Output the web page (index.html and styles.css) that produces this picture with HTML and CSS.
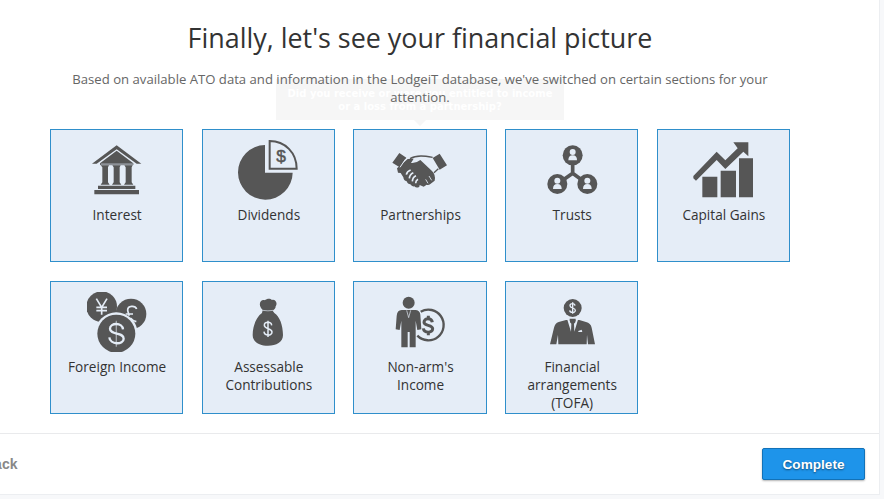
FILE: index.html
```html
<!DOCTYPE html>
<html lang="en">
<head>
<meta charset="utf-8">
<title>Financial picture</title>
<link rel="stylesheet" href="styles.css">
</head>
<body>
<main class="panel">
  <header class="intro">
    <h1 class="title">Finally, let's see your financial picture</h1>
    <div class="tooltip">Did you receive or were you entitled to income<br>or a loss from a partnership?</div>
    <p class="lead">Based on available ATO data and information in the LodgeiT database, we've switched on certain sections for your attention.</p>
  </header>
  <section class="tiles">
    <div class="tile">
      <svg class="icon" viewBox="140 60 180 180"><path d="M155 131L229 76l74 55h-14l-60-43-60 43zM179 130l50-38 50 38v5H179z"/><path class="soft" d="M181 130h97v6h-97z"/><path d="M181 136h25l-3 6v45l5 7h-27l5-7v-45zM216 136h25l-3 6v45l5 7h-28l5-7v-45zM252 136h25l-3 6v45l5 7h-28l5-7v-45zM173 197h112v10H173zM162 210h134v13H162z"/></svg>
      <span class="label">Interest</span>
    </div>
    <div class="tile">
      <svg class="icon" viewBox="130 60 180 180"><path d="M211 75v83h83a82 82 0 1 1-83-83z"/><path class="line" stroke-width="6" d="M225 63v83h81c0-48-35-83-81-83z"/><text class="sign" x="259" y="127" font-size="52">$</text></svg>
      <span class="label">Dividends</span>
    </div>
    <div class="tile">
      <svg class="icon" viewBox="135 60 180 180"><path d="M163 99l21 14-20 29-22-14zM284 101l22 35-22 13-21-35z"/><path d="M188 117l18-1-8 13q14 2 28-9l35 33q12 12 8 29l-10 8q-7 7-14 4l-9 6-12-5-1 5q-8 6-15-1-7 2-12-6-8 0-11-9-9-2-10-12l-8-13-8-1-3-13z"/><path class="line" stroke-width="4" d="M195 116c20-12 45-8 68-4M280 146l-13 12"/><path class="cut" stroke-width="5" d="M197 150q-11 4-13 14M205 158q-11 5-12 17M213 167q-10 4-11 17M219 178q-7 4-7 12"/><path class="cut" stroke-width="2.5" d="M242 178l7 12M252 168l8 13"/><path class="cut" stroke-width="3" d="M182 117l-17 25"/></svg>
      <span class="label">Partnerships</span>
    </div>
    <div class="tile">
      <svg class="icon" viewBox="131 60 180 180"><path class="line" stroke-width="11" d="M223 110v50l-46 32M223 160l44 32"/><circle cx="223" cy="106" r="30"/><circle cx="177" cy="192" r="30"/><circle cx="267" cy="192" r="30"/><g class="paper"><circle cx="223" cy="96" r="9"/><path d="M210 121q0-15 13-15t13 15z"/><circle cx="177" cy="182" r="9"/><path d="M164 207q0-15 13-15t13 15z"/><circle cx="267" cy="182" r="9"/><path d="M254 207q0-15 13-15t13 15z"/></g></svg>
      <span class="label">Trusts</span>
    </div>
    <div class="tile">
      <svg class="icon" viewBox="131 60 180 180"><path d="M159 170h45v62h-45zM214 152h46v80h-46zM269 115h43v117h-43zM132 168l70-73 26 26 37-36-13-18h45v42l-15-14-54 52-26-27-62 62-8-7z"/></svg>
      <span class="label">Capital Gains</span>
    </div>
    <div class="tile">
      <svg class="icon" viewBox="140 51 180 180"><circle cx="184" cy="95" r="46"/><circle cx="272" cy="117" r="46"/><circle class="paper" cx="228" cy="176" r="64"/><circle cx="228" cy="176" r="57"/><path class="cut" stroke-width="5" d="M168 71l16 26 16-26M184 97v22M168 97h32M168 107h32"/><path class="cut" stroke-width="5" d="M289 102c-5-12-27-10-27 3 0 6 4 10 4 17M256 117h22M270 129q7 8 18 11"/><path class="thin" stroke-width="4" d="M228 137v78"/><path class="cut" stroke-width="7" d="M248 163c-1-21-39-21-39-2 0 20 41 9 41 30 0 19-41 19-43-4"/></svg>
      <span class="label">Foreign Income</span>
    </div>
    <div class="tile">
      <svg class="icon" viewBox="130 51 180 180"><path d="M204 105c-16-15-7-34 7-29 6-6 16-6 21-1 10-3 18 10 11 19 0 6-4 10-9 13l5 7c16 10 26 37 26 66 0 22-20 32-45 32s-46-10-46-32c0-29 13-56 28-66z"/><path class="cut" stroke-width="2" d="M203 106q17 3 33 0"/><path class="cut" stroke-width="4.5" d="M231 151c-1-12-22-12-22 0s23 8 23 20c0 13-23 12-24-1M220 137v49"/></svg>
      <span class="label">Assessable Contributions</span>
    </div>
    <div class="tile">
      <svg class="icon" viewBox="135 51 180 180"><circle cx="191" cy="83" r="18"/><path d="M170 105h41q13 0 15 14l3 44-12 2-5-28v80h-18v-46h-6v46h-19v-80l-5 28-12-2 3-40q1-18 15-18z"/><path class="cut" stroke-width="2" d="M185 106l6 22 6-22"/><path class="line" stroke-width="7" d="M227 110a46 46 0 1 1-10 72"/><path class="line" stroke-width="9" d="M262 142c-2-14-25-14-25 0 0 12 26 6 26 19 0 14-26 14-28-1M250 122v12M250 169v12"/></svg>
      <span class="label">Non-arm's Income</span>
    </div>
    <div class="tile">
      <svg class="icon" viewBox="131 51 180 180"><circle cx="223" cy="99" r="27"/><path class="cut" stroke-width="4" d="M230 92c-1-8-15-8-15 0s16 6 16 14c0 9-16 8-17 0M223 82v34"/><path d="M203 135l40 0 20 6q14 3 17 17l10 50h-21l-3-29-1 29h-85l-1-29-5 29h-19l12-50q3-13 14-17z"/><path class="paper" d="M207 134h8v8l4 4-1 24zM239 134h-8v8l-4 4 1 24z"/><path d="M214 131h18v7l-5 5h-8l-5-5z"/><path class="paper" d="M240 168l10-4 2 7h-12z"/></svg>
      <span class="label">Financial arrangements (TOFA)</span>
    </div>
  </section>
  <footer class="actions">
    <a class="back">Back</a>
    <button class="complete">Complete</button>
  </footer>
</main>
</body>
</html>
```
FILE: styles.css
```css
* { box-sizing: border-box; }
body {
  margin: 0;
  height: 499px;
  overflow: hidden;
  background: #f7f8fa;
  font-family: "Open Sans", sans-serif;
  color: #333;
}
.panel {
  width: 919px;
  height: 495px;
  margin-left: -39px;
  display: flex;
  flex-direction: column;
  background: #fff;
  border-right: 1px solid #eceef1;
  border-bottom: 1px solid #eceef1;
}
.intro {
  position: relative;
  height: 129px;
  padding-top: 20px;
  text-align: center;
}
.title {
  margin: 0;
  font-size: 26.9px;
  line-height: 36px;
  font-weight: 400;
}
.lead {
  position: relative;
  width: 740px;
  margin: 14px auto 0;
  font-size: 13.13px;
  line-height: 18px;
  color: #666;
}
.tooltip {
  position: absolute;
  left: 315px;
  top: 79px;
  width: 288px;
  height: 41px;
  padding-top: 8px;
  background: #f6f6f6;
  color: #fff;
  font: 700 10px/13px "DejaVu Sans", sans-serif;
  white-space: nowrap;
}
.tooltip::after {
  content: "";
  position: absolute;
  left: 138px;
  top: 41px;
  border: 6px solid transparent;
  border-top-color: #f6f6f6;
  border-bottom: 0;
}
.tiles {
  display: grid;
  grid-template-columns: repeat(5, 133.3px);
  grid-auto-rows: 133px;
  gap: 19px 18.4px;
  padding-left: 89px;
  height: 304px;
}
.tile {
  display: flex;
  flex-direction: column;
  align-items: center;
  padding: 10px 14px 0;
  border: 1px solid #2f8fcb;
  background: #e5edf7;
}
.icon {
  width: 60px;
  height: 60px;
  flex: none;
  fill: #565656;
}
.label {
  margin-top: 6px;
  padding-left: 1px;
  font-size: 13.6px;
  line-height: 18px;
  text-align: center;
}
.line { fill: none; stroke: #565656; }
.cut { fill: none; stroke: #e5edf7; }
.thin { fill: none; stroke: #a0a4a9; }
.soft { fill: #8d9197; }
.paper { fill: #e5edf7; }
.sign { font-family: "Liberation Sans", sans-serif; text-anchor: middle; stroke: #565656; stroke-width: 1.5px; }
.actions {
  flex: 1;
  display: flex;
  align-items: center;
  justify-content: space-between;
  padding: 0 14px 0 23px;
  border-top: 1px solid #e9eaec;
  font: 700 14px "Liberation Sans", sans-serif;
}
.back { color: #888; }
.complete {
  width: 103px;
  height: 32px;
  padding: 0;
  border: 1px solid #1272b8;
  border-radius: 2px;
  background: #1e94ea;
  box-shadow: 0 1px 2px rgba(0, 0, 0, .3);
  color: #fff;
  font: inherit;
  font-size: 13.6px;
  text-shadow: 0 1px 2px rgba(0, 0, 0, .5);
}
```
